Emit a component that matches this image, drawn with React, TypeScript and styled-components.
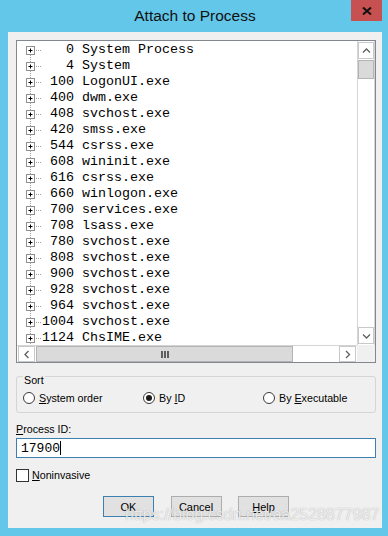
import React from "react";
import styled, { createGlobalStyle } from "styled-components";

const GlobalStyle = createGlobalStyle`
  html, body {
    margin: 0;
    padding: 0;
  }
  body {
    background: #63c7e9;
    font-family: "Liberation Sans", Arial, sans-serif;
  }
`;

const Window = styled.div`
  position: relative;
  width: 388px;
  height: 536px;
  box-sizing: border-box;
  padding: 0 6px 8px 8px;
  background: #63c7e9;
  display: flex;
  flex-direction: column;
`;

const TitleBar = styled.div`
  position: relative;
  height: 32px;
  flex-shrink: 0;
  display: flex;
  align-items: center;
  justify-content: center;
`;

const Title = styled.span`
  font-family: "Liberation Sans", Arial, sans-serif;
  font-size: 15.5px;
  color: #111;
  padding-bottom: 1px;
`;

const CloseButton = styled.div`
  position: absolute;
  top: 0;
  right: 0;
  width: 31px;
  height: 21px;
  background: #c75050;
  display: flex;
  align-items: center;
  justify-content: center;
`;

const Client = styled.div`
  flex: 1;
  background: #f0f0f0;
  padding: 8px 6px 0 8px;
  display: flex;
  flex-direction: column;
  font-size: 10.7px;
  color: #000;
`;

const ListBox = styled.div`
  height: 323px;
  box-sizing: border-box;
  border: 1px solid #828790;
  background: #fff;
  display: grid;
  grid-template-columns: 340px 18px;
  grid-template-rows: 304px 17px;
`;

const Rows = styled.div`
  overflow: hidden;
  display: flex;
  flex-direction: column;
`;

const Row = styled.div`
  height: 16px;
  flex-shrink: 0;
  display: flex;
  align-items: flex-start;
`;

const RowText = styled.span`
  font-family: "Liberation Mono", "Courier New", monospace;
  font-size: 13.33px;
  line-height: 16px;
  padding-top: 1px;
  white-space: pre;
`;

const VScroll = styled.div`
  display: flex;
  flex-direction: column;
  box-sizing: border-box;
  border-left: 1px solid #d4d4d4;
  border-right: 1px solid #d4d4d4;
  background: #fff;
`;

const HScroll = styled.div`
  display: flex;
  box-sizing: border-box;
  border-top: 1px solid #d4d4d4;
  background: #fff;
`;

const Corner = styled.div`
  background: #f0f0f0;
`;

const ArrowButton = styled.div<{ $vertical?: boolean }>`
  flex-shrink: 0;
  box-sizing: border-box;
  width: ${(p) => (p.$vertical ? "100%" : "17px")};
  height: ${(p) => (p.$vertical ? "17px" : "100%")};
  border: 1px solid #c9c9c9;
  margin: ${(p) => (p.$vertical ? "1px 0" : "0 1px")};
  background: #fff;
  display: flex;
  align-items: center;
  justify-content: center;
`;

const Thumb = styled.div<{ $size: number; $vertical?: boolean }>`
  flex-shrink: 0;
  box-sizing: border-box;
  width: ${(p) => (p.$vertical ? "100%" : `${p.$size}px`)};
  height: ${(p) => (p.$vertical ? `${p.$size}px` : "100%")};
  background: #dadada;
  border: 1px solid #b4b4b4;
  display: flex;
  align-items: center;
  justify-content: center;
`;

const Track = styled.div`
  flex: 1;
`;

const GroupBox = styled.div`
  position: relative;
  margin-top: 13px;
  height: 37px;
  box-sizing: border-box;
  border: 1px solid #d5d5d5;
  border-radius: 3px;
  padding: 15px 0 0 6px;
  display: grid;
  grid-template-columns: 120px 120px 1fr;
`;

const GroupLabel = styled.span`
  position: absolute;
  top: -3px;
  left: 6px;
  padding: 0 1px;
  background: #f0f0f0;
  line-height: 13px;
`;

const Option = styled.label`
  display: flex;
  align-items: center;
  gap: 4px;
  height: 12px;
  line-height: 13px;
`;

const RadioCircle = styled.span<{ $checked?: boolean }>`
  width: 12px;
  height: 12px;
  box-sizing: border-box;
  border-radius: 50%;
  border: 1px solid #3a3a3a;
  background: #fff;
  display: flex;
  align-items: center;
  justify-content: center;

  &::after {
    content: "";
    width: 6px;
    height: 6px;
    border-radius: 50%;
    background: ${(p) => (p.$checked ? "#1a1a1a" : "transparent")};
  }
`;

const FieldLabel = styled.div`
  margin-top: 10px;
  line-height: 13px;
`;

const TextBox = styled.div`
  margin-top: 2px;
  height: 20px;
  box-sizing: border-box;
  border: 1px solid #3c7fb1;
  background: #fff;
  padding: 0 4px;
  display: flex;
  align-items: center;
  font-family: "Liberation Mono", "Courier New", monospace;
  font-size: 13px;
`;

const Caret = styled.span`
  width: 1px;
  height: 14px;
  background: #000;
`;

const CheckRow = styled.label`
  margin-top: 11px;
  height: 13px;
  display: flex;
  align-items: center;
  gap: 3px;
  line-height: 13px;
`;

const CheckBox = styled.span`
  width: 13px;
  height: 13px;
  box-sizing: border-box;
  border: 1px solid #333;
  background: #fff;
`;

const ButtonRow = styled.div`
  margin-top: 14px;
  display: flex;
  justify-content: center;
  gap: 16.5px;
`;

const Button = styled.div<{ $default?: boolean }>`
  width: 51px;
  height: 21px;
  box-sizing: border-box;
  border: 1px solid ${(p) => (p.$default ? "#3c7fb1" : "#adadad")};
  background: #e1e1e1;
  display: flex;
  align-items: center;
  justify-content: center;
  font-size: 11px;
`;

const Watermark = styled.div`
  position: absolute;
  left: 125px;
  top: 506px;
  font-family: "Liberation Sans", Arial, sans-serif;
  font-size: 16px;
  color: rgba(255, 255, 255, 0.8);
  text-shadow: 0 0 1px rgba(90, 90, 90, 0.55);
  pointer-events: none;
  white-space: nowrap;
`;

const processes: [number, string][] = [
  [0, "System Process"],
  [4, "System"],
  [100, "LogonUI.exe"],
  [400, "dwm.exe"],
  [408, "svchost.exe"],
  [420, "smss.exe"],
  [544, "csrss.exe"],
  [608, "wininit.exe"],
  [616, "csrss.exe"],
  [660, "winlogon.exe"],
  [700, "services.exe"],
  [708, "lsass.exe"],
  [780, "svchost.exe"],
  [808, "svchost.exe"],
  [900, "svchost.exe"],
  [928, "svchost.exe"],
  [964, "svchost.exe"],
  [1004, "svchost.exe"],
  [1124, "ChsIME.exe"],
];

// tree expander with dotted connectors
function TreeNode({ first }: { first: boolean }) {
  return (
    <svg width="25" height="16" style={{ flexShrink: 0 }}>
      <g stroke="#a0a0a0" strokeDasharray="1 1" fill="none">
        {!first && <line x1="13.5" y1="0" x2="13.5" y2="5" />}
        <line x1="13.5" y1="14" x2="13.5" y2="16" />
        <line x1="19" y1="9.5" x2="24" y2="9.5" />
      </g>
      <rect x="9.5" y="5.5" width="8" height="8" fill="#fff" stroke="#8f8f8f" />
      <line x1="11.5" y1="9.5" x2="15.5" y2="9.5" stroke="#000" />
      <line x1="13.5" y1="7.5" x2="13.5" y2="11.5" stroke="#000" />
    </svg>
  );
}

function Chevron({ dir }: { dir: "up" | "down" | "left" | "right" }) {
  const pts = {
    up: "3,8.5 6.5,5 10,8.5",
    down: "3,5.5 6.5,9 10,5.5",
    left: "8.5,3 5,6.5 8.5,10",
    right: "5,3 8.5,6.5 5,10",
  }[dir];
  return (
    <svg width="13" height="13">
      <polyline points={pts} fill="none" stroke="#606060" strokeWidth="1.3" />
    </svg>
  );
}

function Grip() {
  return (
    <svg width="8" height="7">
      <rect x="0" y="0" width="2" height="7" fill="#606060" />
      <rect x="3" y="0" width="2" height="7" fill="#606060" />
      <rect x="6" y="0" width="2" height="7" fill="#606060" />
    </svg>
  );
}

export default function App() {
  return (
    <>
      <GlobalStyle />
      <Window>
        <TitleBar>
          <Title>Attach to Process</Title>
          <CloseButton>
            <svg width="10" height="8">
              <path d="M1 0.5 L9 7.5 M9 0.5 L1 7.5" stroke="#111" strokeWidth="2" />
            </svg>
          </CloseButton>
        </TitleBar>
        <Client>
          <ListBox>
            <Rows>
              {processes.map(([pid, name], i) => (
                <Row key={pid}>
                  <TreeNode first={i === 0} />
                  <RowText>{String(pid).padStart(4, " ") + " " + name}</RowText>
                </Row>
              ))}
            </Rows>
            <VScroll>
              <ArrowButton $vertical>
                <Chevron dir="up" />
              </ArrowButton>
              <Thumb $vertical $size={19} />
              <Track />
              <ArrowButton $vertical>
                <Chevron dir="down" />
              </ArrowButton>
            </VScroll>
            <HScroll>
              <ArrowButton>
                <Chevron dir="left" />
              </ArrowButton>
              <Thumb $size={257}>
                <Grip />
              </Thumb>
              <Track />
              <ArrowButton>
                <Chevron dir="right" />
              </ArrowButton>
            </HScroll>
            <Corner />
          </ListBox>

          <GroupBox>
            <GroupLabel>Sort</GroupLabel>
            <Option>
              <RadioCircle />
              <span>
                <u>S</u>ystem order
              </span>
            </Option>
            <Option>
              <RadioCircle $checked />
              <span>
                By <u>I</u>D
              </span>
            </Option>
            <Option>
              <RadioCircle />
              <span>
                By <u>E</u>xecutable
              </span>
            </Option>
          </GroupBox>

          <FieldLabel>
            <u>P</u>rocess ID:
          </FieldLabel>
          <TextBox>
            17900
            <Caret />
          </TextBox>

          <CheckRow>
            <CheckBox />
            <span>
              <u>N</u>oninvasive
            </span>
          </CheckRow>

          <ButtonRow>
            <Button $default>OK</Button>
            <Button>Cancel</Button>
            <Button>
              <span>
                <u>H</u>elp
              </span>
            </Button>
          </ButtonRow>
        </Client>
        <Watermark>https://blog.csdn.net/aa2528877987</Watermark>
      </Window>
    </>
  );
}
